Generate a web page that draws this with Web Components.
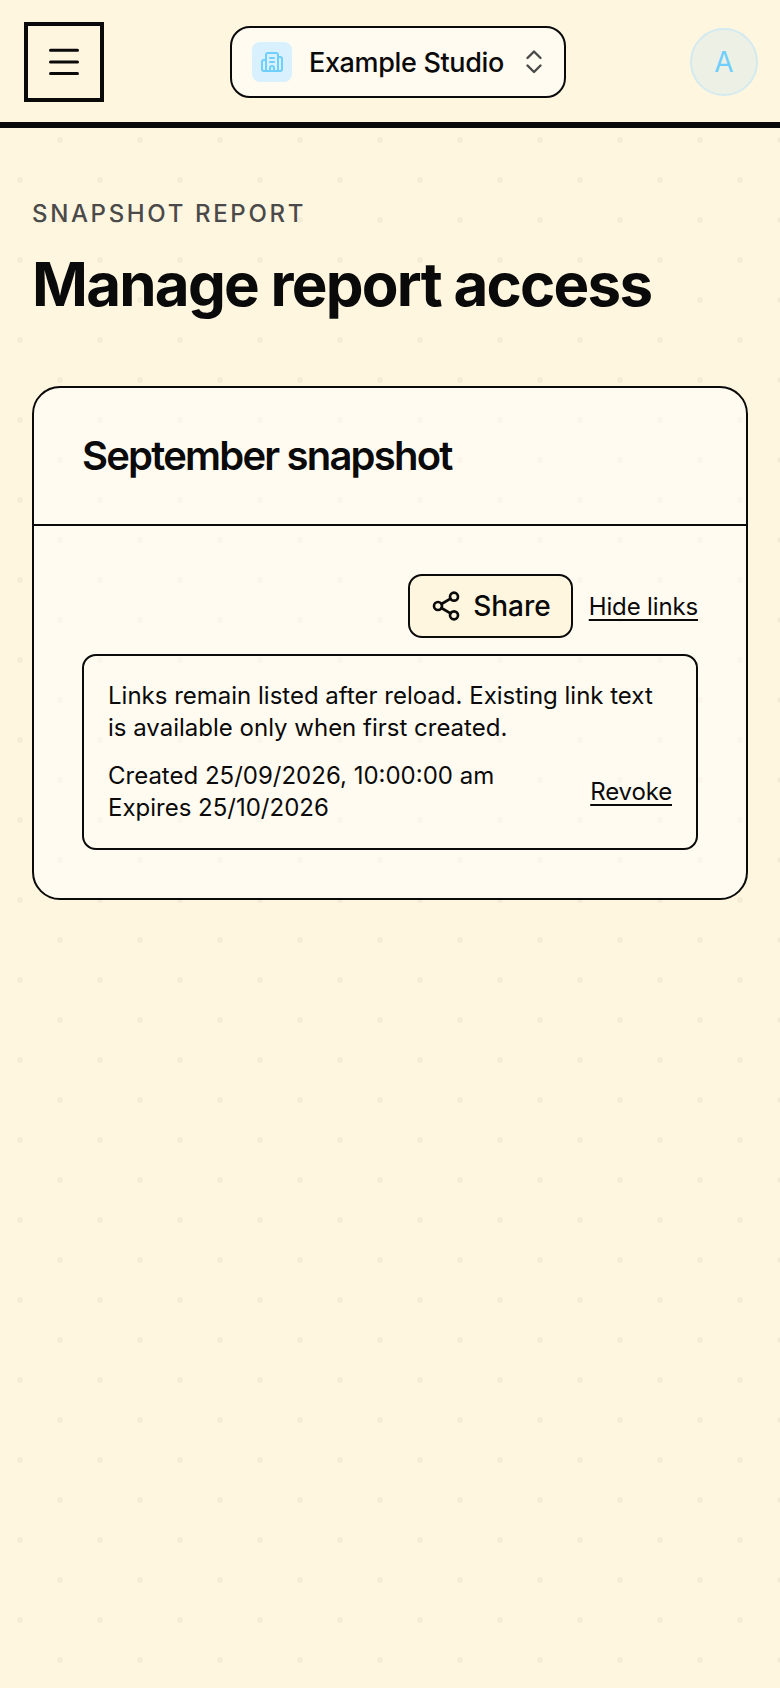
<!DOCTYPE html>
<html lang="en">
<head>
<meta charset="utf-8">
<title>Manage report access</title>
<style>
  html, body { margin: 0; height: 100%; }
  body {
    min-height: 1688px;
    background-color: #fff6e0;
    background-image:
      radial-gradient(circle, rgba(0,0,0,.04) 0 2.4px, transparent 3.4px),
      radial-gradient(circle, rgba(0,0,0,.04) 0 2.4px, transparent 3.4px);
    background-size: 80px 80px;
    background-position: -20px -20px, 20px 20px;
    color: #0a0a0a;
    font-family: Inter, "Liberation Sans", sans-serif;
  }
</style>
</head>
<body>
<app-header>
  <studio-switcher slot="center">Example Studio</studio-switcher>
</app-header>
<report-page eyebrow="SNAPSHOT REPORT" heading="Manage report access">
  <report-card heading="September snapshot">
    <share-bar></share-bar>
    <link-item created="Created 25/09/2026, 10:00:00 am" expires="Expires 25/10/2026">
      Links remain listed after reload. Existing link text is available only when first created.
    </link-item>
  </report-card>
</report-page>

<script>
// header with menu button, switcher and avatar
class AppHeader extends HTMLElement {
  constructor() {
    super();
    const shadow = this.attachShadow({ mode: 'open' });
    shadow.innerHTML = `
      <style>
        :host { display: block; }
        .bar {
          display: flex;
          align-items: center;
          justify-content: space-between;
          box-sizing: border-box;
          height: 128px;
          padding: 2px 22px 0 24px;
          border-bottom: 6px solid #0a0a0a;
          background: #fff6e0;
        }
        .menu {
          width: 80px; height: 80px;
          box-sizing: border-box;
          border: 4px solid #0a0a0a;
          display: flex; align-items: center; justify-content: center;
        }
        .menu svg { display: block; }
        .avatar {
          width: 68px; height: 68px;
          box-sizing: border-box;
          border-radius: 50%;
          border: 2px solid #d3eaf0;
          background: #edf1e5;
          color: #6fcfff;
          font-size: 28px;
          display: flex; align-items: center; justify-content: center;
        }
        ::slotted(studio-switcher) { margin-left: 2px; }
      </style>
      <div class="bar">
        <div class="menu">
          <svg width="32" height="28" viewBox="0 0 32 28" fill="none" stroke="#0a0a0a" stroke-width="3" stroke-linecap="round">
            <path d="M2.5 2.3h27M2.5 14h27M2.5 25.5h27"/>
          </svg>
        </div>
        <slot name="center"></slot>
        <div class="avatar">A</div>
      </div>`;
  }
}

class StudioSwitcher extends HTMLElement {
  constructor() {
    super();
    const shadow = this.attachShadow({ mode: 'open' });
    shadow.innerHTML = `
      <style>
        :host { display: block; }
        .switch {
          width: 336px; height: 72px;
          box-sizing: border-box;
          display: flex; align-items: center;
          padding: 0 20px;
          border: 2px solid #0a0a0a;
          border-radius: 20px;
          background: #fffbf0;
        }
        .icon {
          width: 40px; height: 40px; flex: none;
          border-radius: 8px;
          background: #d9f1ff;
          display: flex; align-items: center; justify-content: center;
        }
        .name { flex: 1; margin-left: 17px; font-size: 27px; font-weight: 500; letter-spacing: -.35px; white-space: nowrap; }
      </style>
      <div class="switch">
        <span class="icon">
          <svg width="24" height="24" viewBox="0 0 24 24" fill="none" stroke="#6fcfff" stroke-width="2" stroke-linecap="round" stroke-linejoin="round">
            <path d="M10 12h4M10 8h4"/>
            <path d="M14 21v-3a2 2 0 0 0-4 0v3"/>
            <path d="M6 10H4a2 2 0 0 0-2 2v7a2 2 0 0 0 2 2h16a2 2 0 0 0 2-2V9a2 2 0 0 0-2-2h-2"/>
            <path d="M6 21V5a2 2 0 0 1 2-2h8a2 2 0 0 1 2 2v16"/>
          </svg>
        </span>
        <span class="name"><slot></slot></span>
        <svg width="20" height="28" viewBox="0 0 20 28" fill="none" stroke="#4a4a4a" stroke-width="2.4" stroke-linecap="round" stroke-linejoin="round">
          <path d="M3.5 10l6.5-6.5 6.5 6.5M3.5 17.5l6.5 6.5 6.5-6.5"/>
        </svg>
      </div>`;
  }
}

class ReportPage extends HTMLElement {
  constructor() {
    super();
    const shadow = this.attachShadow({ mode: 'open' });
    shadow.innerHTML = `
      <style>
        :host { display: block; padding: 70px 32px 0; }
        .eyebrow { font-size: 24px; line-height: 32px; font-weight: 500; letter-spacing: 2.65px; color: #4a4a4a; }
        h1 {
          margin: 18px 0 0;
          font-size: 60px; line-height: 72px; font-weight: 700;
          letter-spacing: -1.75px;
        }
        .content { margin-top: 66px; }
      </style>
      <div class="eyebrow">${this.getAttribute('eyebrow')}</div>
      <h1>${this.getAttribute('heading')}</h1>
      <div class="content"><slot></slot></div>`;
  }
}

class ReportCard extends HTMLElement {
  constructor() {
    super();
    const shadow = this.attachShadow({ mode: 'open' });
    shadow.innerHTML = `
      <style>
        :host {
          display: block;
          border: 2px solid #0a0a0a;
          border-radius: 28px;
          background: rgba(255,255,255,.5);
        }
        header { padding: 48px; border-bottom: 2px solid #0a0a0a; }
        h2 { margin: 0; font-size: 40px; line-height: 40px; font-weight: 600; letter-spacing: -1.8px; }
        .body { padding: 48px; display: flex; flex-direction: column; gap: 16px; }
      </style>
      <header><h2>${this.getAttribute('heading')}</h2></header>
      <div class="body"><slot></slot></div>`;
  }
}

class ShareBar extends HTMLElement {
  constructor() {
    super();
    const shadow = this.attachShadow({ mode: 'open' });
    shadow.innerHTML = `
      <style>
        :host { display: flex; justify-content: flex-end; align-items: center; gap: 16px; }
        .share {
          height: 64px; box-sizing: border-box;
          display: flex; align-items: center; gap: 11px;
          padding: 0 20px;
          border: 2px solid #0a0a0a;
          border-radius: 14px;
          background: #fff6e0;
          font-size: 28px; font-weight: 500;
        }
        a {
          color: inherit; font-size: 24px;
          letter-spacing: -.15px;
          text-decoration: underline;
          text-decoration-thickness: 2px;
          text-underline-offset: 4px;
        }
      </style>
      <div class="share">
        <svg width="32" height="32" viewBox="0 0 24 24" fill="none" stroke="#0a0a0a" stroke-width="2" stroke-linecap="round" stroke-linejoin="round">
          <circle cx="18" cy="5" r="3"/><circle cx="6" cy="12" r="3"/><circle cx="18" cy="19" r="3"/>
          <path d="M8.6 13.5l6.8 4M15.4 6.5l-6.8 4"/>
        </svg>
        Share
      </div>
      <a href="#">Hide links</a>`;
  }
}

class LinkItem extends HTMLElement {
  constructor() {
    super();
    const shadow = this.attachShadow({ mode: 'open' });
    shadow.innerHTML = `
      <style>
        :host {
          display: block;
          border: 2px solid #0a0a0a;
          border-radius: 14px;
          padding: 24px;
          font-size: 24px; line-height: 32px;
        }
        .row { display: flex; justify-content: space-between; align-items: center; margin-top: 16px; }
        a {
          color: inherit;
          letter-spacing: -.15px;
          text-decoration: underline;
          text-decoration-thickness: 2px;
          text-underline-offset: 4px;
        }
      </style>
      <div><slot></slot></div>
      <div class="row">
        <div>${this.getAttribute('created')}<br>${this.getAttribute('expires')}</div>
        <a href="#">Revoke</a>
      </div>`;
  }
}

customElements.define('app-header', AppHeader);
customElements.define('studio-switcher', StudioSwitcher);
customElements.define('report-page', ReportPage);
customElements.define('report-card', ReportCard);
customElements.define('share-bar', ShareBar);
customElements.define('link-item', LinkItem);
</script>
</body>
</html>
